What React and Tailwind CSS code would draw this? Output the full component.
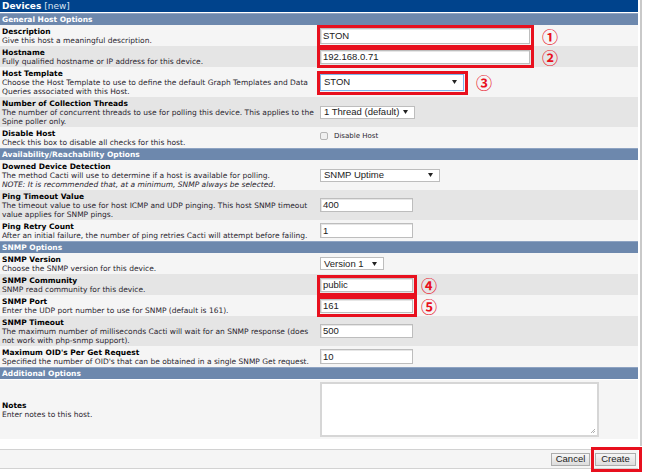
import React from 'react'

const ARIAL = "font-['Liberation_Sans',Arial,sans-serif]"

const Section = ({ title }) => (
  <div className="h-[12px] bg-[#6d88ad] text-white font-bold pl-[2px] leading-[11px] border-t border-[#8ea3c2]">
    {title}
  </div>
)

const Row = ({ title, desc, shade, children }) => (
  <div className={`flex items-center ${shade ? 'bg-[#e5e5e5]' : 'bg-[#f5f5f5]'}`}>
    <div className="w-[316px] shrink-0 pl-[2px] pt-[2px] pb-[1px] whitespace-nowrap">
      <div className="font-bold text-black">{title}</div>
      <div className="text-[#2a1f2f]">{desc}</div>
    </div>
    <div className="flex items-center pl-[4px]">{children}</div>
  </div>
)

const TextBox = ({ value, className = 'w-[93px] h-[14px]' }) => (
  <div className={`${className} bg-white border border-[#bdbdbd] shadow-[inset_1px_1px_0_#e6e6e6] pl-[2px] flex items-center text-[9.5px] leading-none text-[#222] ${ARIAL}`}>
    {value}
  </div>
)

const Arrow = () => (
  <svg width="5" height="4" viewBox="0 0 5 4" className="shrink-0">
    <path d="M0 0 H5 L2.5 4 Z" fill="#222" />
  </svg>
)

const Select = ({ value, className, focus }) => (
  <div className={`${className} bg-white border ${focus ? 'border-[#7eb4ea]' : 'border-[#bdbdbd]'} pl-[3px] pr-[6px] flex items-center justify-between text-[9.5px] leading-none text-[#222] ${ARIAL}`}>
    <span>{value}</span>
    <Arrow />
  </div>
)

const Mark = ({ n, gap, children }) => (
  <div className="flex items-center">
    <div className="relative">
      {children}
      <div className="absolute -left-[3px] -top-[3px] -right-[4px] -bottom-[4px] border-[3px] border-[#e8101e] pointer-events-none" />
    </div>
    <span className={`${gap} text-[#e8101e] text-[16px] leading-[12px] font-bold font-['Noto_Sans_CJK_JP',sans-serif]`}>{n}</span>
  </div>
)

export default function App() {
  return (
    <div className="flex bg-white w-[645px] h-[475px] text-[7.5px] leading-[9px] font-['DejaVu_Sans',Verdana,sans-serif]">
      <div className="w-[638px] shrink-0">
        {/* title */}
        <div className="h-[12px] bg-[#00438c] text-white pl-[2px] text-[9px] leading-[12px] mb-[1px]">
          <span className="font-bold">Devices</span> <span className="text-[#dbe5f3]">[new]</span>
        </div>

        <Section title="General Host Options" />
        <Row title="Description" desc="Give this host a meaningful description.">
          <Mark n="①" gap="ml-[12px]">
            <TextBox value="STON" className="w-[210px] h-[16px]" />
          </Mark>
        </Row>
        <Row shade title="Hostname" desc="Fully qualified hostname or IP address for this device.">
          <Mark n="②" gap="ml-[12px]">
            <TextBox value="192.168.0.71" className="w-[210px] h-[14px]" />
          </Mark>
        </Row>
        <Row
          title="Host Template"
          desc={<>Choose the Host Template to use to define the default Graph Templates and Data<br />Queries associated with this Host.</>}
        >
          <Mark n="③" gap="ml-[12px]">
            <Select value="STON" focus className="w-[144px] h-[17px]" />
          </Mark>
        </Row>
        <Row
          shade
          title="Number of Collection Threads"
          desc={<>The number of concurrent threads to use for polling this device. This applies to the<br />Spine poller only.</>}
        >
          <Select value="1 Thread (default)" className="w-[95px] h-[13px]" />
        </Row>
        <Row title="Disable Host" desc="Check this box to disable all checks for this host.">
          <div className="flex items-center gap-[6px] -mt-[3px]">
            <div className="w-[8px] h-[8px] rounded-[2px] border border-[#b5b5b5] bg-[#f0f0f0]" />
            <span className="text-[#2a1f2f] text-[7px]">Disable Host</span>
          </div>
        </Row>

        <Section title="Availability/Reachability Options" />
        <Row
          title="Downed Device Detection"
          desc={<>The method Cacti will use to determine if a host is available for polling.<br /><i>NOTE: It is recommended that, at a minimum, SNMP always be selected.</i></>}
        >
          <Select value="SNMP Uptime" className="w-[120px] h-[13px]" />
        </Row>
        <Row
          shade
          title="Ping Timeout Value"
          desc={<>The timeout value to use for host ICMP and UDP pinging. This host SNMP timeout<br />value applies for SNMP pings.</>}
        >
          <TextBox value="400" />
        </Row>
        <Row title="Ping Retry Count" desc="After an initial failure, the number of ping retries Cacti will attempt before failing.">
          <TextBox value="1" className="w-[93px] h-[15px]" />
        </Row>

        <Section title="SNMP Options" />
        <Row title="SNMP Version" desc="Choose the SNMP version for this device.">
          <Select value="Version 1" className="w-[64px] h-[13px]" />
        </Row>
        <Row shade title="SNMP Community" desc="SNMP read community for this device.">
          <Mark n="④" gap="ml-[8px]">
            <TextBox value="public" />
          </Mark>
        </Row>
        <Row title="SNMP Port" desc="Enter the UDP port number to use for SNMP (default is 161).">
          <Mark n="⑤" gap="ml-[8px]">
            <TextBox value="161" />
          </Mark>
        </Row>
        <Row
          shade
          title="SNMP Timeout"
          desc={<>The maximum number of milliseconds Cacti will wait for an SNMP response (does<br />not work with php-snmp support).</>}
        >
          <TextBox value="500" />
        </Row>
        <Row title="Maximum OID's Per Get Request" desc="Specified the number of OID's that can be obtained in a single SNMP Get request.">
          <TextBox value="10" className="w-[93px] h-[15px]" />
        </Row>

        <Section title="Additional Options" />
        <div className="flex items-center bg-[#f5f5f5] h-[59px] mt-[1px]">
          <div className="w-[316px] shrink-0 pl-[2px]">
            <div className="font-bold text-black">Notes</div>
            <div className="text-[#2a1f2f]">Enter notes to this host.</div>
          </div>
          <div className="relative ml-[4px] w-[279px] h-[55px] bg-white border-2 border-[#d6d6d6]">
            <svg width="6" height="6" viewBox="0 0 6 6" className="absolute right-[1px] bottom-[1px]">
              <path d="M5 1 L1 5 M5 3 L3 5" stroke="#9a9a9a" strokeWidth="0.8" />
            </svg>
          </div>
        </div>

        {/* buttons */}
        <div className="mt-[10px] h-[20px] bg-[#f5f5f5] border-y border-[#d2d2d2] flex items-center justify-end pr-[2px] gap-[5px]">
          <button className={`w-[39px] h-[13px] border border-[#adadad] bg-gradient-to-b from-[#f6f6f6] to-[#dddddd] text-[9.5px] leading-none text-[#222] ${ARIAL}`}>
            Cancel
          </button>
          <div className="relative">
            <button className={`w-[41px] h-[13px] border border-[#adadad] bg-gradient-to-b from-[#f6f6f6] to-[#dddddd] text-[9.5px] leading-none text-[#222] ${ARIAL}`}>
              Create
            </button>
            <div className="absolute -left-[4px] -top-[6px] -right-[6px] -bottom-[6px] border-[3px] border-[#e8101e] pointer-events-none" />
          </div>
        </div>
      </div>
      <div className="ml-[2px] w-[2px] h-[446px] bg-[#c9c9c9]" />
    </div>
  )
}
